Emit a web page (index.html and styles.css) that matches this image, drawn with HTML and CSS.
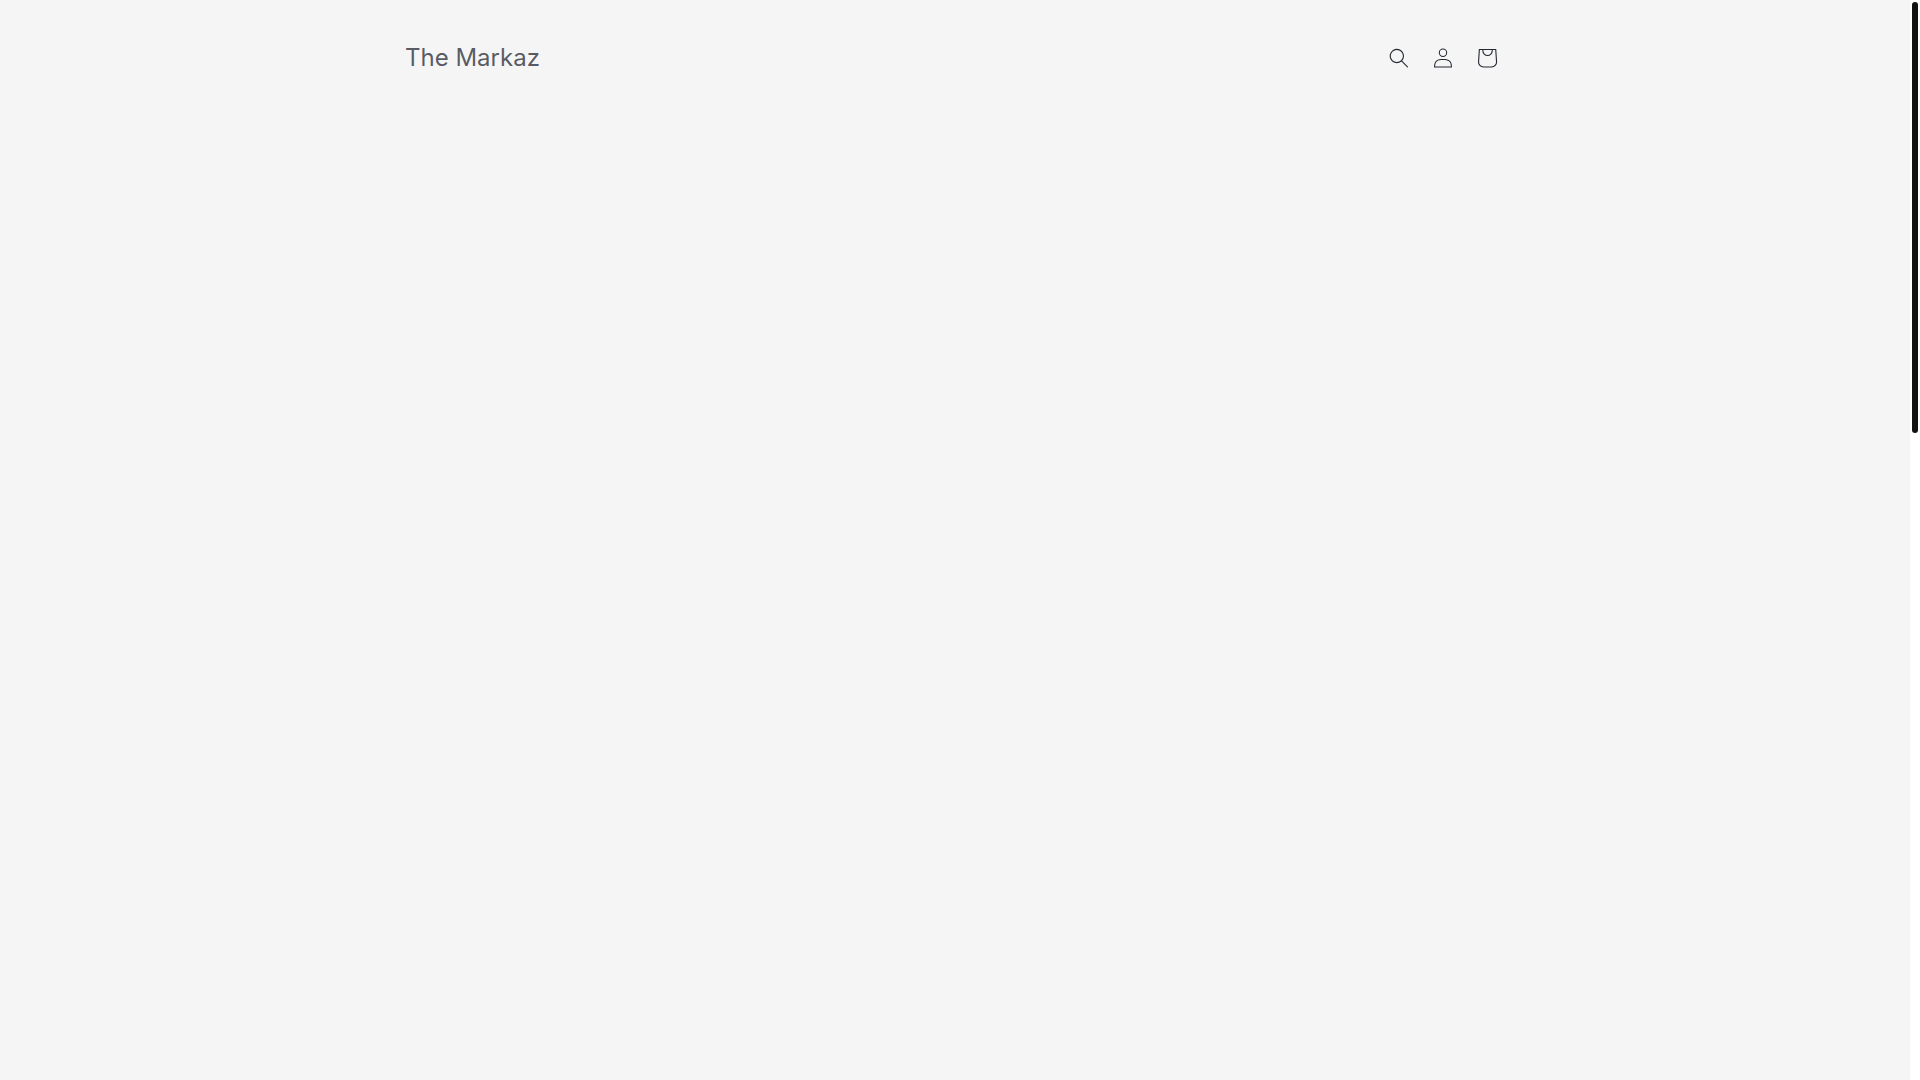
FILE: index.html
```html
<!DOCTYPE html>
<html lang="en">
<head>
<meta charset="utf-8">
<meta name="viewport" content="width=device-width, initial-scale=1">
<title>The Markaz</title>
<link rel="stylesheet" href="styles.css">
</head>
<body>
<div class="page">
  <header class="header">
    <h1 class="header-heading"><a class="header-link" href="/">The Markaz</a></h1>
    <div class="header-icons">
      <button class="header-icon" type="button" aria-label="Search">
        <svg class="icon" viewBox="0 0 18 19" aria-hidden="true"><path fill="currentColor" fill-rule="evenodd" clip-rule="evenodd" d="M11.03 11.68A5.784 5.784 0 112.85 3.5a5.784 5.784 0 018.18 8.18zm.26 1.12a6.78 6.78 0 11.72-.7l5.4 5.4a.5.5 0 11-.71.7l-5.41-5.4z"/></svg>
      </button>
      <a class="header-icon" href="/account" aria-label="Log in">
        <svg class="icon" viewBox="0 0 18 19" aria-hidden="true"><path fill="currentColor" fill-rule="evenodd" clip-rule="evenodd" d="M6 4.5a3 3 0 116 0 3 3 0 01-6 0zm3-4a4 4 0 100 8 4 4 0 000-8zm5.58 12.15c1.12.82 1.83 2.24 1.91 4.85H1.51c.08-2.6.79-4.03 1.9-4.85C4.66 11.75 6.5 11.5 9 11.5s4.35.26 5.58 1.15zM9 10.5c-2.5 0-4.65.24-6.17 1.35C1.27 12.98.5 14.93.5 18v.5h17V18c0-3.07-.77-5.02-2.33-6.15-1.52-1.1-3.67-1.35-6.17-1.35z"/></svg>
      </a>
      <a class="header-icon" href="/cart" aria-label="Cart">
        <svg class="icon-cart" viewBox="0 0 40 40" aria-hidden="true"><path fill="currentColor" fill-rule="evenodd" d="M15.75 11.8h-3.16l-.77 11.6a5 5 0 0 0 4.99 5.34h7.38a5 5 0 0 0 4.99-5.33L28.4 11.8zm0 1h-2.22l-.71 10.67a4 4 0 0 0 3.99 4.27h7.38a4 4 0 0 0 4-4.27l-.72-10.67h-2.22v.63a4.75 4.75 0 1 1-9.5 0zm8.5 0h-7.5v.63a3.75 3.75 0 1 0 7.5 0z"/></svg>
      </a>
    </div>
  </header>
</div>
<div class="scroll-track"><div class="scroll-thumb"></div></div>
</body>
</html>
```
FILE: styles.css
```css
* {
  box-sizing: border-box;
}

body {
  margin: 0;
  min-height: 100vh;
  display: flex;
  background: #f5f5f5;
  color: #242833;
  font-family: Inter, "Liberation Sans", sans-serif;
}

.page {
  flex: 1;
}

.header {
  max-width: 1200px;
  margin: 0 auto;
  padding: 36px 46px 36px 50px;
  display: flex;
  align-items: center;
  justify-content: space-between;
}

.header-heading {
  margin: 0;
  font-size: 24px;
  line-height: 32px;
  font-weight: 400;
}

.header-link {
  color: rgba(36, 40, 51, 0.75);
  text-decoration: none;
}

.header-icons {
  display: flex;
}

.header-icon {
  width: 44px;
  height: 44px;
  padding: 0;
  border: 0;
  background: none;
  color: inherit;
  display: flex;
  align-items: center;
  justify-content: center;
  cursor: pointer;
}

.icon {
  width: 20px;
  height: 20px;
}

.icon-cart {
  width: 44px;
  height: 44px;
}

.scroll-track {
  width: 10px;
  padding: 2px;
  background: #fff;
}

.scroll-thumb {
  height: calc(40vh - 1px);
  border-radius: 3px;
  background: #121212;
}
```
